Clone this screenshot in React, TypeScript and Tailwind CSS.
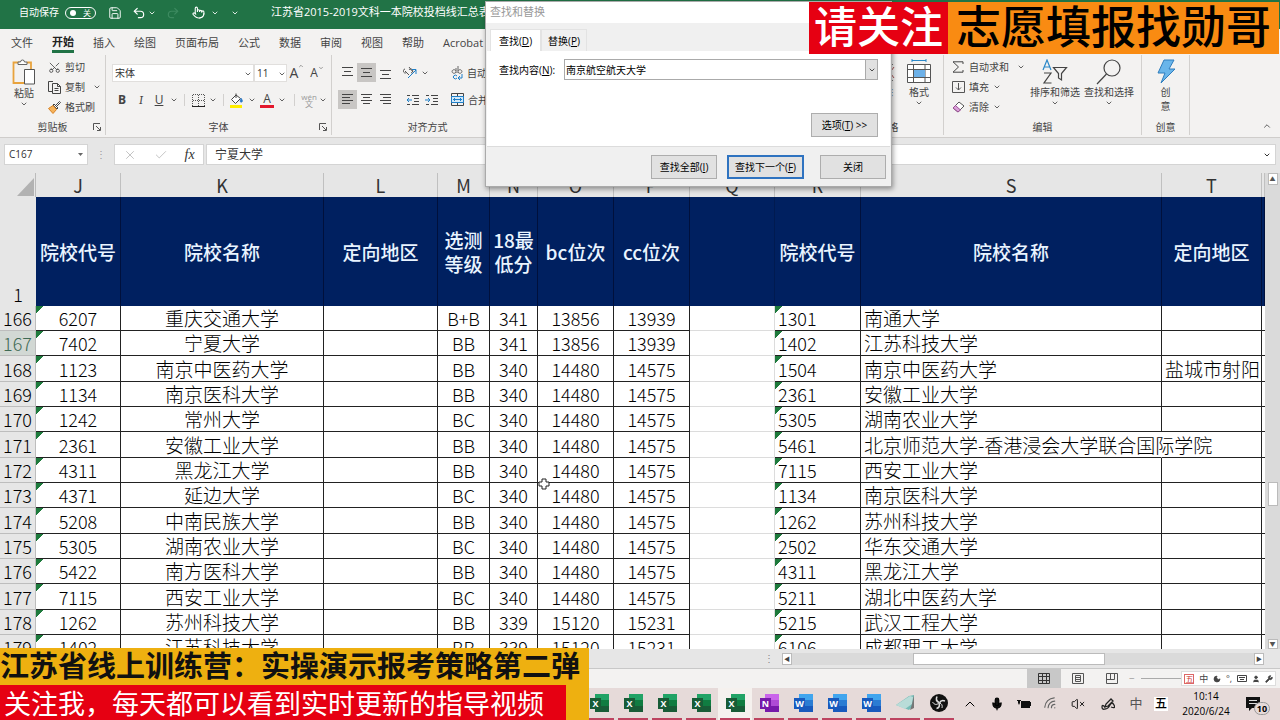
import type { ReactNode } from "react";
import {
  BatteryCharging,
  Check,
  ChevronDown,
  ChevronUp,
  Mic,
  Moon,
  Pointer,
  Redo2,
  Save,
  Scissors,
  Undo2,
  User,
  VolumeX,
  Wifi,
  Wrench,
  X,
} from "lucide-react";

interface Row {
  n: number;
  code: string;
  name: string;
  level: string;
  score: number;
  bc: number;
  cc: number;
  code2: string;
  name2: string;
  area?: string;
}

const rows: Row[] = [
  { n: 166, code: "6207", name: "重庆交通大学", level: "B+B", score: 341, bc: 13856, cc: 13939, code2: "1301", name2: "南通大学" },
  { n: 167, code: "7402", name: "宁夏大学", level: "BB", score: 341, bc: 13856, cc: 13939, code2: "1402", name2: "江苏科技大学" },
  { n: 168, code: "1123", name: "南京中医药大学", level: "BB", score: 340, bc: 14480, cc: 14575, code2: "1504", name2: "南京中医药大学", area: "盐城市射阳" },
  { n: 169, code: "1134", name: "南京医科大学", level: "BB", score: 340, bc: 14480, cc: 14575, code2: "2361", name2: "安徽工业大学" },
  { n: 170, code: "1242", name: "常州大学", level: "BC", score: 340, bc: 14480, cc: 14575, code2: "5305", name2: "湖南农业大学" },
  { n: 171, code: "2361", name: "安徽工业大学", level: "BB", score: 340, bc: 14480, cc: 14575, code2: "5461", name2: "北京师范大学-香港浸会大学联合国际学院" },
  { n: 172, code: "4311", name: "黑龙江大学", level: "BB", score: 340, bc: 14480, cc: 14575, code2: "7115", name2: "西安工业大学" },
  { n: 173, code: "4371", name: "延边大学", level: "BC", score: 340, bc: 14480, cc: 14575, code2: "1134", name2: "南京医科大学" },
  { n: 174, code: "5208", name: "中南民族大学", level: "BB", score: 340, bc: 14480, cc: 14575, code2: "1262", name2: "苏州科技大学" },
  { n: 175, code: "5305", name: "湖南农业大学", level: "BC", score: 340, bc: 14480, cc: 14575, code2: "2502", name2: "华东交通大学" },
  { n: 176, code: "5422", name: "南方医科大学", level: "BB", score: 340, bc: 14480, cc: 14575, code2: "4311", name2: "黑龙江大学" },
  { n: 177, code: "7115", name: "西安工业大学", level: "BC", score: 340, bc: 14480, cc: 14575, code2: "5211", name2: "湖北中医药大学" },
  { n: 178, code: "1262", name: "苏州科技大学", level: "BB", score: 339, bc: 15120, cc: 15231, code2: "5215", name2: "武汉工程大学" },
  { n: 179, code: "1402", name: "江苏科技大学", level: "BB", score: 339, bc: 15120, cc: 15231, code2: "6106", name2: "成都理工大学" },
];

const columns = [
  { letter: "J", width: "w-[85px]", title: "院校代号" },
  { letter: "K", width: "w-[203px]", title: "院校名称" },
  { letter: "L", width: "w-[114px]", title: "定向地区" },
  { letter: "M", width: "w-[52px]", title: "选测等级" },
  { letter: "N", width: "w-[48px]", title: "18最低分" },
  { letter: "O", width: "w-[76px]", title: "bc位次" },
  { letter: "P", width: "w-[76px]", title: "cc位次" },
  { letter: "Q", width: "w-[85px]", title: "" },
  { letter: "R", width: "w-[86px]", title: "院校代号" },
  { letter: "S", width: "", title: "院校名称" },
  { letter: "T", width: "w-[100px]", title: "定向地区" },
  { letter: "", width: "w-[3px]", title: "" },
];

const tabs = ["文件", "开始", "插入", "绘图", "页面布局", "公式", "数据", "审阅", "视图", "帮助", "Acrobat"];

function Chevron({ className = "w-3" }: { className?: string }) {
  return (
    <span className={`flex shrink-0 justify-center ${className}`}>
      <ChevronDown size={8} strokeWidth={2.5} />
    </span>
  );
}

function Lines({ rows: r, active, label }: { rows: number[][]; active?: boolean; label: string }) {
  return (
    <button aria-label={label} className={`flex h-[19px] w-[19px] items-center justify-center ${active ? "bg-[#c8c6c4]" : ""}`}>
      <svg width="13" height="13" viewBox="0 0 13 13" stroke="#444" strokeWidth="1">
        {r.map(([x1, x2, y]) => (
          <path key={y} d={`M${x1} ${y}.5H${x2}`} />
        ))}
      </svg>
    </button>
  );
}

function Indent({ out, label }: { out?: boolean; label: string }) {
  return (
    <button aria-label={label} className="flex h-[19px] w-[19px] items-center justify-center">
      <svg width="14" height="12" viewBox="0 0 14 12" fill="none" stroke="#444">
        <path d="M1 1.5h3M6 1.5h7M8 4.5h5M8 7.5h5M1 10.5h3M6 10.5h7" />
        <path stroke="#1e7fc8" d={out ? "M6 6H1M3 4L1 6l2 2" : "M0 6h5M3 4l2 2-2 2"} />
      </svg>
    </button>
  );
}

function Launcher() {
  return (
    <svg width="8" height="8" viewBox="0 0 8 8" fill="none" stroke="#555">
      <path d="M.5 7V.5H7M3 3l4 4M7.5 4v3.5H4" />
    </svg>
  );
}

function Group({ name, className, launcher, children }: { name: string; className: string; launcher?: boolean; children: ReactNode }) {
  return (
    <section className={`flex shrink-0 flex-col border-r border-[#d2d0ce] ${className}`}>
      <div className="h-16">{children}</div>
      <div className="flex h-4 items-center">
        <span className="w-3" />
        <span className="flex-1 text-center">{name}</span>
        <span className="w-3">{launcher && <Launcher />}</span>
      </div>
    </section>
  );
}

function Ribbon() {
  return (
    <div className="flex h-[83px] shrink-0 border-b border-[#cfcdcb] bg-[#f3f2f1] pb-0.5 text-[10px] leading-[14px] whitespace-nowrap text-[#444]">
      <Group name="剪贴板" className="w-[106px]" launcher>
        <div className="flex pt-1">
          <button className="flex w-12 shrink-0 flex-col items-center">
            <svg width="24" height="27" viewBox="0 0 24 27" fill="none">
              <path d="M9 3.500H1.500V24H12M15 3.500h4V10" stroke="#e8a33d" strokeWidth="1.800" />
              <path d="M6 5.500V3h2.500a2 2 0 0 1 4 0H15v2.500z" fill="#fff" stroke="#666" />
              <path d="M12.500 10.500h10V25h-10z" fill="#fff" stroke="#555" />
            </svg>
            <span>粘贴</span>
            <Chevron />
          </button>
          <div className="flex flex-col gap-1">
            <button className="flex h-4 items-center gap-1">
              <Scissors size={13} strokeWidth={1.5} className="-rotate-90" />
              剪切
            </button>
            <button className="flex h-4 items-center gap-1">
              <svg width="13" height="13" viewBox="0 0 13 13" fill="none" stroke="#444">
                <path d="M4 10.500H.5V.5H5M4.500 2.500h5l3 3v7h-8zM9.500 2.500v3h3M6.500 7.500h4M6.500 9.500h4" />
              </svg>
              复制
              <Chevron className="w-4" />
            </button>
            <button className="flex h-4 items-center gap-1">
              <svg width="13" height="13" viewBox="0 0 13 13" fill="none" stroke="#444">
                <path d="M8 4l3.500-3.500 1 1L9 5M6 3l4 4-1 1-4-4z" fill="#fff" />
                <path d="M5 4.500L.5 7.500 5 12.500l3.500-4z" fill="#f5b35c" stroke="#d98324" />
              </svg>
              格式刷
            </button>
          </div>
        </div>
      </Group>

      <Group name="字体" className="w-[226px]" launcher>
        <div className="flex items-center pt-2 pl-1.5">
          <div className="relative">
            <select aria-label="字体" className="block h-[18px] w-[142px] appearance-none border border-[#e1dfdd] bg-white pl-0.5 text-[10px] text-[#333]">
              <option>宋体</option>
            </select>
            <Chevron className="pointer-events-none absolute top-1.5 right-0 w-3" />
          </div>
          <div className="relative">
            <select aria-label="字号" className="block h-[18px] w-[33px] appearance-none border border-[#e1dfdd] bg-white pl-0.5 text-[10px] text-[#333]">
              <option>11</option>
            </select>
            <Chevron className="pointer-events-none absolute top-1.5 right-0 w-2.5" />
          </div>
          <button aria-label="增大字号" className="flex w-5 justify-center text-sm">
            A<ChevronUp size={6} />
          </button>
          <button aria-label="减小字号" className="flex w-5 justify-center text-xs">
            A<ChevronDown size={6} />
          </button>
        </div>
        <div className="mt-2 flex h-[18px] items-center pl-1.5 text-[12px] [&>button]:flex [&>button]:items-center [&>button]:justify-center">
          <button className="w-5 font-bold">B</button>
          <button className="w-[18px] font-serif italic">I</button>
          <button className="w-[18px] underline">U</button>
          <Chevron />
          <i className="mx-1 h-3 w-px bg-[#d2d0ce]" />
          <button aria-label="边框" className="w-[18px]">
            <svg width="13" height="13" viewBox="0 0 13 13" stroke="#555" fill="none">
              <path strokeDasharray="1 1" d="M.5 12V.5h12V12M6.500 1v11M1 6.500h11" />
              <path stroke="#222" d="M0 12.500h13" />
            </svg>
          </button>
          <Chevron />
          <i className="mx-1 h-3 w-px bg-[#d2d0ce]" />
          <button aria-label="填充颜色" className="w-[18px]">
            <svg width="14" height="15" viewBox="0 0 14 15" fill="none" stroke="#444">
              <path d="M6 2L1.500 6.500l4 4 5-5zM6 5V.5" fill="#fff" />
              <path d="M11 5q2.500 3 1 4t-2-1z" fill="#2878c8" stroke="#2878c8" strokeWidth=".5" />
              <path d="M0 12h12v3H0z" fill="#ffed00" stroke="none" />
            </svg>
          </button>
          <Chevron />
          <button className="w-[18px]">
            <span className="w-[14px] border-b-[3px] border-[#e3182d] text-center leading-[13px]">A</span>
          </button>
          <Chevron />
          <i className="mx-1.5 h-3 w-px bg-[#d2d0ce]" />
          <button className="w-4 flex-col text-[8px] leading-[7px] text-[#999]">
            <span>wén</span>
            <span>文</span>
          </button>
          <Chevron />
        </div>
      </Group>

      <Group name="对齐方式" className="w-[192px]" launcher>
        <div className="flex items-center pt-2 pl-1.5">
          <Lines label="顶端对齐" rows={[[1, 12, 1], [3, 10, 5], [1, 12, 9]]} />
          <Lines label="垂直居中" active rows={[[1, 12, 2], [3, 10, 6], [1, 12, 10]]} />
          <Lines label="底端对齐" rows={[[1, 12, 4], [3, 10, 8], [1, 12, 12]]} />
          <button aria-label="方向" className="ml-2 flex w-4">
            <svg width="14" height="13" viewBox="0 0 14 13" fill="none" stroke="#555">
              <path d="M2 5l4 4M2 3a2 2 0 1 0 2 3M6 1l4 5M6 4a2 2 0 1 1 2 3" />
              <path stroke="#1e7fc8" d="M5 12l8-8M9 3.500h4V8" />
            </svg>
          </button>
          <Chevron />
          <button className="ml-5 flex items-center gap-1">
            <svg width="12" height="14" viewBox="0 0 12 14" fill="none" stroke="#666">
              <path d="M5 2v5M5 5a2 1.800 0 1 0 0 1M7 0v7M7 5a2 1.800 0 1 1 0 1" />
              <path stroke="#1e7fc8" d="M6 10a2 1.800 0 1 0 0 2M11 8v4H7M9 10l-2 2 2 2" />
            </svg>
            自动换行
          </button>
        </div>
        <div className="mt-2 flex items-center pl-1.5">
          <Lines label="左对齐" active rows={[[1, 12, 1], [1, 9, 4], [1, 12, 7], [1, 9, 10]]} />
          <Lines label="居中" rows={[[1, 12, 1], [3, 10, 4], [1, 12, 7], [3, 10, 10]]} />
          <Lines label="右对齐" rows={[[1, 12, 1], [4, 12, 4], [1, 12, 7], [4, 12, 10]]} />
          <span className="w-2" />
          <Indent out label="减少缩进量" />
          <Indent label="增加缩进量" />
          <button className="ml-2.5 flex items-center gap-1">
            <svg width="13" height="13" viewBox="0 0 13 13" fill="none" stroke="#444">
              <path d="M.5.5h12v12H.5zM6.500 0v3M6.500 10v3" />
              <path fill="#d3e8f8" stroke="#1e7fc8" d="M.5 3.500h12v6H.5z" />
              <path stroke="#1e7fc8" d="M2 6.500h9M4 5L2.500 6.500 4 8M9 5l1.500 1.500L9 8" />
            </svg>
            合并后居中
          </button>
        </div>
      </Group>

      <div className="flex-1" />

      <Group name="单元格" className="w-[120px]">
        <div className="flex justify-end gap-3 pt-1 pr-3">
          <button className="flex w-6 flex-col items-center">
            <svg width="24" height="26" viewBox="0 0 24 26" fill="none" stroke="#777">
              <path d="M22 5.500H.5v16H22M.5 10h14M.5 16h14" />
              <path stroke="#a55" d="M15 8l8 11M23 8l-8 11" />
            </svg>
            删除
            <Chevron />
          </button>
          <button className="flex w-6 flex-col items-center">
            <svg width="24" height="26" viewBox="0 0 24 26" fill="none" stroke="#555">
              <path stroke="#2b88c8" d="M5 1.500h14M5 0v3M19 0v3" />
              <path d="M.5 5.500h23v18H.5zM6.500 6v17M18 6v17M1 10.500h22M1 18.500h22" fill="#fff" />
              <path d="M7 11h11v7H7z" fill="#6db1e8" stroke="none" />
            </svg>
            格式
            <Chevron />
          </button>
        </div>
      </Group>

      <Group name="编辑" className="w-[198px]">
        <div className="flex pt-1 pl-2">
          <div className="flex w-[78px] flex-col gap-1">
            <button className="flex h-4 items-center gap-1">
              <svg width="13" height="12" viewBox="0 0 13 12" fill="none" stroke="#444">
                <path d="M11 3V.8H1L6.500 6 1 11.200h10V9" />
              </svg>
              自动求和
              <Chevron className="w-4" />
            </button>
            <button className="flex h-4 items-center gap-1">
              <svg width="13" height="12" viewBox="0 0 13 12" fill="none" stroke="#555">
                <path d="M.5.5h12v11H.5z" />
                <path d="M6.500 2v7M4 6.500L6.500 9 9 6.500" />
              </svg>
              填充
              <Chevron className="w-2" />
            </button>
            <button className="flex h-4 items-center gap-1">
              <svg width="13" height="12" viewBox="0 0 13 12" fill="none" stroke="#555">
                <path d="M7 1l5 4-6 6-5-4z" fill="#fff" />
                <path d="M3.500 4.500L8.500 9 6 11 1 7z" fill="#d9a0d8" stroke="#9b4f96" />
              </svg>
              清除
              <Chevron className="w-2" />
            </button>
          </div>
          <button className="flex w-[50px] flex-col items-center">
            <svg width="26" height="26" viewBox="0 0 26 26" fill="none" stroke="#444" strokeWidth="1.200">
              <path stroke="#2b88c8" d="M1 11L5 1l4 10M2.500 8h5" />
              <path d="M2 14h7L2 24h7.500" />
              <path d="M11.500 8.500h13l-5 6V21l-3-2v-4.500z" />
            </svg>
            排序和筛选
            <Chevron />
          </button>
          <button className="ml-1 flex w-[50px] flex-col items-center">
            <svg width="26" height="26" viewBox="0 0 26 26" fill="none" stroke="#444" strokeWidth="1.200">
              <circle cx="16" cy="9" r="8" />
              <path d="M10.500 15L1 25" />
            </svg>
            查找和选择
            <Chevron />
          </button>
        </div>
      </Group>

      <Group name="创意" className="w-12">
        <button className="flex w-full flex-col items-center pt-1">
          <svg width="20" height="26" viewBox="0 0 20 26">
            <path d="M8 1h10l-5 9h6L5 24l4-10H2z" fill="#69b5ea" stroke="#2f7dbd" />
          </svg>
          <span>创</span>
          <span>意</span>
        </button>
      </Group>

      <div className="flex w-[90px] items-end justify-end pr-2 pb-1">
        <button aria-label="折叠功能区">
          <ChevronUp size={10} />
        </button>
      </div>
    </div>
  );
}

function Sheet() {
  const cell = "border-r border-b border-[#222] p-0";
  const num = `${cell} text-center text-[18px]`;
  const flag = "bg-[linear-gradient(135deg,#1e7a3c_5px,transparent_5px)]";

  return (
    <table className="w-full table-fixed border-separate border-spacing-0 bg-white text-[19px] leading-6 font-light text-black">
      <colgroup>
        <col className="w-9" />
        {columns.map((c, i) => (
          <col key={i} className={c.width} />
        ))}
      </colgroup>
      <thead>
        <tr className="h-6 bg-[#e6e6e6]">
          <th className="border-r border-[#bbb] p-0 align-bottom">
            <svg width="18" height="19" viewBox="0 0 18 19" className="ml-auto">
              <path d="M17 0v18H0z" fill="#b2b2b2" />
            </svg>
          </th>
          {columns.map((c, i) => (
            <th key={i} scope="col" className="border-r border-[#c0c0c0] p-0 text-[18px] font-normal text-[#333]">
              {c.letter}
            </th>
          ))}
        </tr>
        <tr className="h-[109px] bg-[#002060] text-[#e9f4ff]">
          <th className="bg-[#e6e6e6] p-0 align-bottom text-[18px] font-light text-black">1</th>
          {columns.map((c, i) => (
            <th key={i} className={`border-r p-0 font-medium ${c.letter === "Q" ? "border-[#001a50]" : "border-[#00103c]"}`}>
              {c.title}
            </th>
          ))}
        </tr>
      </thead>
      <tbody>
        {rows.map((r) => (
          <tr key={r.n} className="h-[25px] nth-[3n]:h-[26px]">
            <th
              scope="row"
              className={`border-r border-b border-[#bdbdbd] p-0 text-[18px] font-light ${
                r.n === 167 ? "bg-[#d2d8d4] text-[#3f6a54]" : "bg-[#e6e6e6] text-black"
              }`}
            >
              {r.n}
            </th>
            <td className={`${num} ${flag}`}>{r.code}</td>
            <td className={`${cell} text-center`}>{r.name}</td>
            <td className={cell} />
            <td className={num}>{r.level}</td>
            <td className={num}>{r.score}</td>
            <td className={num}>{r.bc}</td>
            <td className={num}>{r.cc}</td>
            <td className="border-r border-b border-[#dcdcdc] p-0" />
            <td className={`${cell} ${flag} pl-[3px] text-[18px]`}>{r.code2}</td>
            <td className={`border-r border-b border-b-[#222] py-0 pr-0 pl-[3px] whitespace-nowrap ${r.n === 171 ? "border-r-transparent" : "border-r-[#222]"}`}>
              {r.name2}
            </td>
            <td className={`${cell} pl-[3px] whitespace-nowrap`}>{r.area}</td>
            <td className="border-b border-[#222] p-0" />
          </tr>
        ))}
      </tbody>
    </table>
  );
}

function VerticalScroll() {
  return (
    <div className="flex w-[15px] shrink-0 flex-col items-center bg-[#dadada]">
      <button aria-label="向上滚动" className="flex h-3 w-2.5 items-center justify-center border border-[#bbb] bg-white text-[6px] text-[#555]">▲</button>
      <div className="flex-[297]" />
      <div className="h-6 w-2.5 border border-[#bbb] bg-white" />
      <div className="flex-[133]" />
      <button aria-label="向下滚动" className="flex h-2.5 w-2.5 items-center justify-center border border-[#bbb] bg-white text-[6px] text-[#555]">▼</button>
    </div>
  );
}

function FindDialog() {
  const btn = "h-6 border bg-[#e1e1e1] text-center";
  return (
    <div
      role="dialog"
      aria-label="查找和替换"
      className="absolute top-px left-[485px] flex w-[407px] flex-col border border-[#aaa] bg-[#f0f0f0] text-[10px] leading-[14px] text-black shadow-[1px_2px_5px_rgba(0,0,0,0.4)]"
    >
      <div className="h-[21px] bg-white pt-0.5 pl-1 text-[11px] leading-4 text-[#999]">查找和替换</div>
      <div className="flex h-7 items-end pl-1">
        <button className="h-[22px] w-[51px] border border-b-0 border-[#e3e3e3] bg-white">
          查找(<u>D</u>)
        </button>
        <button className="h-[22px] w-[46px] border border-b-0 border-[#e3e3e3] text-center">
          替换(<u>P</u>)
        </button>
      </div>
      <div className="mx-px flex h-24 flex-col border-b border-[#dcdcdc] bg-white pt-2 pr-3 pl-3">
        <div className="flex items-center">
          <label htmlFor="find" className="w-[65px]">
            查找内容(<u>N</u>):
          </label>
          <div className="flex h-[21px] flex-1 border border-[#aaa]">
            <input id="find" defaultValue="南京航空航天大学" className="min-w-0 flex-1 pl-px outline-none" />
            <button aria-label="历史记录" className="flex w-3 items-center justify-center border-l border-[#aaa] bg-[#e1e1e1]">
              <ChevronDown size={8} />
            </button>
          </div>
        </div>
        <button className={`${btn} mt-[33px] w-[67px] self-end border-[#adadad]`}>
          选项(<u>T</u>) &gt;&gt;
        </button>
      </div>
      <div className="flex h-[39px] items-center justify-end pr-[5px]">
        <button className={`${btn} w-[66px] border-[#adadad]`}>
          查找全部(<u>I</u>)
        </button>
        <button className={`${btn} ml-2.5 w-[77px] border-2 border-[#2f73c0] leading-[18px]`}>
          查找下一个(<u>F</u>)
        </button>
        <button className={`${btn} ml-4 w-[66px] border-[#adadad]`}>关闭</button>
      </div>
    </div>
  );
}

function OfficeIcon({ kind }: { kind: "X" | "W" | "N" }) {
  const c = {
    X: ["#21a366", "#107c41", "#185c37"],
    W: ["#41a5ee", "#2b7cd3", "#185abd"],
    N: ["#ca64ea", "#ae4bd5", "#7719aa"],
  }[kind];
  return (
    <svg width="19" height="18" viewBox="0 0 19 18">
      <path d="M5 0h14v6H5z" fill={c[0]} />
      <path d="M5 6h14v6H5z" fill={c[1]} />
      <path d="M5 12h14v6H5z" fill={c[2]} />
      <path d="M0 4h11v11H0z" fill={c[2]} />
      <text x="5.500" y="13" textAnchor="middle" fontSize="9" fontWeight="700" fill="#fff">
        {kind}
      </text>
    </svg>
  );
}

function Taskbar() {
  const apps: ("X" | "W" | "N")[] = ["X", "X", "X", "X", "X", "N", "W", "W", "W"];
  const slot = "flex w-[34px] shrink-0 flex-col items-center justify-between px-0.5 pt-1.5";
  return (
    <footer className="flex h-8 shrink-0 bg-[#e6dad9] pl-[582px] text-black">
      {apps.map((a, i) => (
        <button key={i} className={`${slot} ${i === 4 ? "bg-[#f5f1ee]" : ""}`}>
          <OfficeIcon kind={a} />
          <span className="h-0.5 w-full bg-[#bd4360]" />
        </button>
      ))}
      <button aria-label="便笺" className={slot}>
        <svg width="19" height="18" viewBox="0 0 19 18">
          <path d="M0 11L13 2l5-1v10l-5 5z" fill="#77bdb8" />
          <path d="M0 11L14 2l3 1-1 7-7 5z" fill="#b9dcd8" />
          <path d="M18 1v13l-4 2 2-6z" fill="#777" />
        </svg>
        <span className="h-0.5 w-full bg-[#bd4360]" />
      </button>
      <button aria-label="OBS" className={slot}>
        <svg width="18" height="18" viewBox="0 0 18 18">
          <circle cx="9" cy="9" r="9" fill="#111" />
          <g fill="none" stroke="#ddd" strokeWidth="1.600">
            <path d="M7 2.500q-2 4 2 6" />
            <path d="M15 7q-4-1.500-5.500 2" />
            <path d="M6.500 14.500q4-1 2.500-5.500" />
            <path d="M2.500 8q2.500 4 6 1.500M12 14q1-4-2.500-5" strokeWidth="1" />
          </g>
        </svg>
        <span className="h-0.5 w-full bg-[#bd4360]" />
      </button>
      <div className="flex flex-1 items-center justify-end [&>button]:flex [&>button]:justify-center">
        <button aria-label="隐藏的图标" className="w-7"><ChevronUp size={16} strokeWidth={1.5} /></button>
        <button aria-label="麦克风" className="w-[26px]"><Mic size={14} fill="#111" /></button>
        <button aria-label="电池" className="w-7">
          <svg width="14" height="10" viewBox="0 0 14 10" fill="#111">
            <path d="M4 2h9v1h1v4h-1v2H4zM0 1h4v1H3v2l-1 2-1-2V2H0z" />
          </svg>
        </button>
        <button aria-label="网络" className="w-[26px]"><Wifi size={16} strokeWidth={1.8} className="-rotate-45 text-[#666]" /></button>
        <button aria-label="音量" className="w-7"><VolumeX size={14} strokeWidth={1.5} /></button>
        <button aria-label="手写笔" className="w-8">
          <svg width="14" height="14" viewBox="0 0 14 14" fill="none" stroke="#222" strokeWidth="1.300">
            <path d="M4 10l1-3 5-5 2 2-5 5zM4 10q-3-3-3 0t3 2q3 0 5-4t4 0-3 2" />
          </svg>
        </button>
        <button className="w-6 text-[13px] text-[#555]">中</button>
        <button className="ml-1.5 w-[14px] bg-white text-[12px] leading-[14px] font-medium">五</button>
        <div className="ml-2 w-[60px] text-center text-[10px] leading-[15px]">
          10:14
          <br />
          2020/6/24
        </div>
        <button aria-label="通知" className="w-11">
          <span className="flex items-end">
            <svg width="14" height="14" viewBox="0 0 14 14">
              <path d="M0 0h14v11H6l-3 3v-3H0z" fill="#111" />
              <path d="M3 3.500h8M3 6.500h8" stroke="#ddd" />
            </svg>
            <span className="-mb-1 -ml-1.5 rounded-full border border-[#999] bg-[#e6dad9] px-0.5 text-[9px] leading-[11px] font-bold">10</span>
          </span>
        </button>
      </div>
    </footer>
  );
}

export default function App() {
  return (
    <div className="relative flex h-screen flex-col overflow-hidden bg-[#e6e6e6] font-['Open_Sans','Noto_Sans_CJK_SC',sans-serif]">
      <header className="flex h-[29px] shrink-0 items-center bg-[#217346] pb-1 pl-[19px] text-[10px] whitespace-nowrap text-white">
        自动保存
        <button className="ml-1.5 flex h-3 w-[31px] items-center justify-between rounded-full border border-white px-1 text-[8px]">
          <span className="h-1.5 w-1.5 rounded-full bg-white" />关
        </button>
        <button aria-label="保存" className="ml-3"><Save size={14} strokeWidth={1.6} /></button>
        <button aria-label="撤消" className="ml-2.5"><Undo2 size={14} /></button>
        <Chevron />
        <button aria-label="恢复" className="ml-2 text-[#3d8a60]"><Redo2 size={14} /></button>
        <button aria-label="触摸模式" className="ml-3"><Pointer size={13} /></button>
        <Chevron className="ml-1 w-3" />
        <Chevron className="ml-2 w-3" />
        <span className="ml-[30px] text-[11px]">江苏省2015-2019文科一本院校投档线汇总表.xlsx</span>
      </header>

      <nav className="flex h-[26px] shrink-0 items-start gap-[19px] bg-[#f3f2f1] pt-1 pl-[11px] text-[11px] leading-4 text-[#444]">
        {tabs.map((t) => (
          <button
            key={t}
            className={`h-5 whitespace-nowrap ${t === "开始" ? "border-b-[3px] border-[#217346] font-bold text-[#222]" : ""}`}
          >
            {t}
          </button>
        ))}
      </nav>

      <Ribbon />

      <div className="flex h-[35px] shrink-0 items-start pt-1.5 pr-1 pl-1 text-[10px] text-[#333]">
        <div className="flex h-[21px] w-[84px] items-center border border-[#d4d4d4] bg-white pr-1">
          <input aria-label="名称框" defaultValue="C167" className="min-w-0 flex-1 pl-1 outline-none" />
          <svg width="5" height="3" viewBox="0 0 5 3">
            <path d="M0 0h5L2.500 3z" fill="#666" />
          </svg>
        </div>
        <span className="w-[26px] text-center leading-5 text-[#999]">⋮</span>
        <div className="flex h-[21px] w-[90px] items-center justify-around border border-[#d4d4d4] bg-white">
          <X size={14} strokeWidth={1.5} className="text-[#bbb]" />
          <Check size={14} strokeWidth={1.5} className="text-[#bbb]" />
          <span className="font-['Liberation_Serif',serif] text-[14px] italic">fx</span>
        </div>
        <div className="ml-0.5 flex h-[21px] flex-1 items-center border border-[#d4d4d4] bg-white pr-1">
          <input aria-label="编辑栏" defaultValue="宁夏大学" className="min-w-0 flex-1 pl-2 text-[12px] outline-none" />
          <ChevronDown size={8} strokeWidth={3} />
        </div>
      </div>

      <main className="flex min-h-0 flex-1 overflow-hidden">
        <div className="min-w-0 flex-1 overflow-hidden font-['Noto_Sans_CJK_SC',sans-serif]">
          <Sheet />
        </div>
        <VerticalScroll />
      </main>

      <div className="flex h-5 shrink-0 items-center border-b border-[#c8c8c8] bg-[#e6e6e6] pr-4 pl-[764px] text-[10px] text-[#888]">
        ⋮
        <div className="ml-2 flex h-3 flex-1 items-center bg-[#dadada]">
          <button aria-label="向左滚动" className="h-full w-2.5 border border-[#bbb] bg-white text-[6px] leading-[10px] text-[#444]">◀</button>
          <div className="flex-[122]" />
          <div className="h-full flex-[190] border border-[#bbb] bg-white" />
          <div className="flex-[150]" />
          <button aria-label="向右滚动" className="h-full w-2.5 border border-[#bbb] bg-white text-[6px] leading-[10px] text-[#444]">▶</button>
        </div>
      </div>

      <div className="flex h-[19px] shrink-0 items-center justify-end bg-[#f3f2f1] pr-1 text-[#444] [&>button]:flex [&>button]:h-full [&>button]:w-[34px] [&>button]:items-center [&>button]:justify-center">
        <button aria-label="普通" className="bg-[#c8c8c8]">
          <svg width="12" height="11" viewBox="0 0 12 11" fill="none" stroke="#333">
            <path d="M.5.5h11v10H.5zM4.500 0v11M8.500 0v11M0 3.500h12M0 7.500h12" />
          </svg>
        </button>
        <button aria-label="页面布局">
          <svg width="12" height="11" viewBox="0 0 12 11" fill="none" stroke="#555">
            <path d="M.5.5h11v10H.5zM3.500 2.500h5v6h-5zM4 4.500h4M4 6.500h4" />
          </svg>
        </button>
        <button aria-label="分页预览">
          <svg width="12" height="11" viewBox="0 0 12 11" fill="none" stroke="#555">
            <path d="M.5.5h11v10H.5zM4.500 0v6M0 6.500h8.500V0" />
          </svg>
        </button>
        <span className="w-3 text-[10px] text-[#999]">−</span>
        <input type="range" aria-label="缩放" className="h-px w-10 appearance-none bg-[#aaa] [&::-webkit-slider-thumb]:appearance-none" />
        <div className="flex h-[15px] w-[95px] items-center justify-around border border-[#ddd] bg-white text-[9px] leading-none">
          <span className="border border-[#d66] text-[8px] text-[#c33]">五</span>
          <span>中</span>
          <Moon size={8} fill="#444" />
          <span>°,</span>
          <svg width="10" height="7" viewBox="0 0 10 7" fill="none" stroke="#444">
            <path d="M.5.5h9v6h-9zM2 2.500h6M3 4.500h4" />
          </svg>
          <User size={8} fill="#444" />
          <Wrench size={8} fill="#444" />
        </div>
      </div>

      <Taskbar />

      <FindDialog />

      {/* mouse pointer over the grid */}
      <svg width="12" height="12" viewBox="0 0 12 12" className="absolute top-[478px] left-[538px]">
        <path d="M4 1h4v3h3v4H8v3H4V8H1V4h3z" fill="#fff" stroke="#222" />
      </svg>

      {/* stream banners */}
      <div className="absolute top-0.5 right-px flex h-[52px] items-center font-['Noto_Sans_CJK_SC',sans-serif] leading-none whitespace-nowrap">
        <span className="flex h-full items-center bg-[#e60012] px-[5px] pb-2 text-[43px] font-medium text-white">请关注</span>
        <span className="flex h-full items-center bg-[#f98b12] px-2 pb-2 text-[45px] font-medium text-black">志愿填报找勋哥</span>
      </div>
      <div className="absolute bottom-0 left-0 h-[72px] w-[589px] bg-[#eeb010] font-['Noto_Sans_CJK_SC',sans-serif] whitespace-nowrap">
        <p className="h-[37px] text-[29px] leading-8 font-bold text-[#111]">江苏省线上训练营：实操演示报考策略第二弹</p>
        <p className="h-[35px] w-[566px] bg-[#e60012] pl-1 text-[27px] leading-9 text-white">关注我，每天都可以看到实时更新的指导视频</p>
      </div>
    </div>
  );
}
